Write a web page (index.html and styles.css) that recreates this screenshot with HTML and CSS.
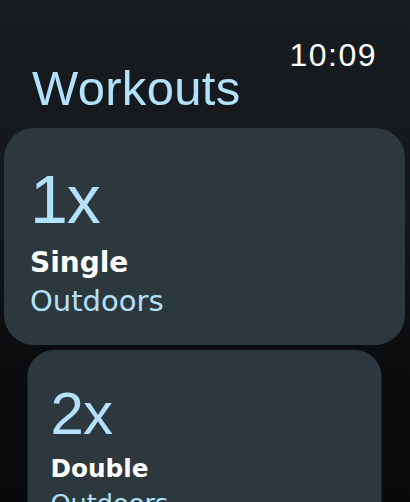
FILE: index.html
```html
<!DOCTYPE html>
<html lang="en">
<head>
<meta charset="utf-8">
<title>Workouts</title>
<link rel="stylesheet" href="styles.css">
</head>
<body>
<div class="screen">
  <header class="header">
    <div class="time">10:09</div>
    <h1 class="title">Workouts</h1>
  </header>
  <main class="list">
    <div class="card">
      <div class="count">1x</div>
      <div class="name">Single</div>
      <div class="place">Outdoors</div>
    </div>
    <div class="card card-next">
      <div class="count">2x</div>
      <div class="name">Double</div>
      <div class="place">Outdoors</div>
    </div>
  </main>
</div>
</body>
</html>
```
FILE: styles.css
```css
html, body {
  margin: 0;
  padding: 0;
  height: 100%;
  overflow: hidden;
}
body {
  background: linear-gradient(to bottom, #171c20 0%, #13171a 45%, #090b0c 75%, #07090a 100%);
  font-family: "Liberation Sans", Arial, sans-serif;
}
.screen {
  display: flex;
  flex-direction: column;
}
.header {
  display: flex;
  flex-direction: column;
  padding: 43px 33px 0 32px;
}
.time {
  align-self: flex-end;
  color: #ffffff;
  font-size: 32px;
  line-height: 24px;
  letter-spacing: 1.5px;
}
.title {
  margin: 3px 0 0;
  color: #b3e0fa;
  font-size: 49px;
  font-weight: normal;
  line-height: 36px;
  letter-spacing: 0.3px;
}
.list {
  display: flex;
  flex-direction: column;
  gap: 5px;
  padding: 22px 5px 0 4px;
}
.card {
  background: #2d373e;
  border-radius: 30px;
  padding: 41px 20px 29px 26px;
  display: flex;
  flex-direction: column;
}
.card-next {
  transform: scale(0.883);
  transform-origin: top center;
}
.count {
  color: #b3e0fa;
  font-size: 68px;
  line-height: 60px;
  letter-spacing: -1px;
}
.name {
  margin-top: 20px;
  color: #ffffff;
  font-family: "DejaVu Sans", sans-serif;
  font-weight: bold;
  font-size: 28px;
  line-height: 28px;
}
.place {
  margin-top: 10px;
  color: #b3e0fa;
  font-family: "DejaVu Sans", sans-serif;
  font-size: 29px;
  line-height: 29px;
}
```
